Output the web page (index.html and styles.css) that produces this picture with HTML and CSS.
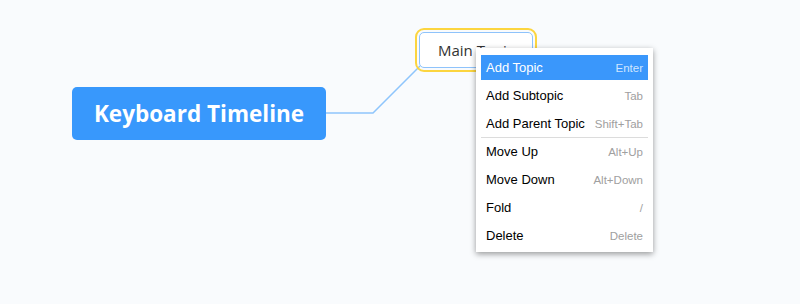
FILE: index.html
```html
<!DOCTYPE html>
<html lang="en">
<head>
    <title>Keyboard Timeline</title>
    <link rel="stylesheet" href="styles.css">
</head>
<body>
    <div class="canvas">
        <!-- connector root -> main topic -->
        <svg class="links" width="800" height="304">
            <polyline points="326,113 373,113 420,66" fill="none" stroke="#8ec5fc" stroke-width="1.5"/>
        </svg>
        <div class="node root">Keyboard Timeline</div>
        <div class="node topic">Main Topic</div>

        <div class="menu">
            <div class="item active"><span>Add Topic</span><span class="key">Enter</span></div>
            <div class="item"><span>Add Subtopic</span><span class="key">Tab</span></div>
            <div class="item"><span>Add Parent Topic</span><span class="key">Shift+Tab</span></div>
            <div class="sep"></div>
            <div class="item"><span>Move Up</span><span class="key">Alt+Up</span></div>
            <div class="item"><span>Move Down</span><span class="key">Alt+Down</span></div>
            <div class="item"><span>Fold</span><span class="key">/</span></div>
            <div class="item"><span>Delete</span><span class="key">Delete</span></div>
        </div>
    </div>
</body>
</html>
```

FILE: styles.css
```css
body {
    margin: 0;
    background: #f9fbfd;
    font-family: "Open Sans", "Liberation Sans", sans-serif;
}
.canvas {
    position: relative;
    width: 800px;
    height: 304px;
    overflow: hidden;
}
.links {
    position: absolute;
    left: 0;
    top: 0;
}
.node {
    position: absolute;
    display: flex;
    align-items: center;
    justify-content: center;
    box-sizing: border-box;
}
.root {
    left: 72px;
    top: 87px;
    width: 254px;
    height: 53px;
    border-radius: 5px;
    background: #3898fc;
    color: white;
    font-size: 22.5px;
    font-weight: bold;
}
.topic {
    left: 419px;
    top: 32px;
    width: 114px;
    height: 36px;
    border: 1.5px solid #8ec3fb;
    border-radius: 5px;
    background: white;
    color: #333;
    font-size: 15px;
    outline: 2px solid #fcd53f; /* selected */
    outline-offset: 2px;
}
.menu {
    position: absolute;
    left: 476px;
    top: 48px;
    width: 177px;
    height: 204px;
    box-sizing: border-box;
    padding: 7px 5px 1px;
    background: white;
    box-shadow: 0 2px 6px rgba(0, 0, 0, 0.4);
    font-family: "Liberation Sans", Arial, sans-serif;
}
.item {
    display: flex;
    justify-content: space-between;
    align-items: center;
    height: 25px;
    margin-bottom: 3px;
    padding: 0 5px;
    font-size: 13px;
    color: #000;
}
.item .key {
    font-size: 11.5px;
    color: #a0a0a0;
}
.item.active {
    background: #3a97fb;
    color: white;
}
.item.active .key {
    color: #d0e6ff;
}
.sep {
    height: 1px;
    margin: -2px 0 1px;
    background: #dcdcdc;
}
```
